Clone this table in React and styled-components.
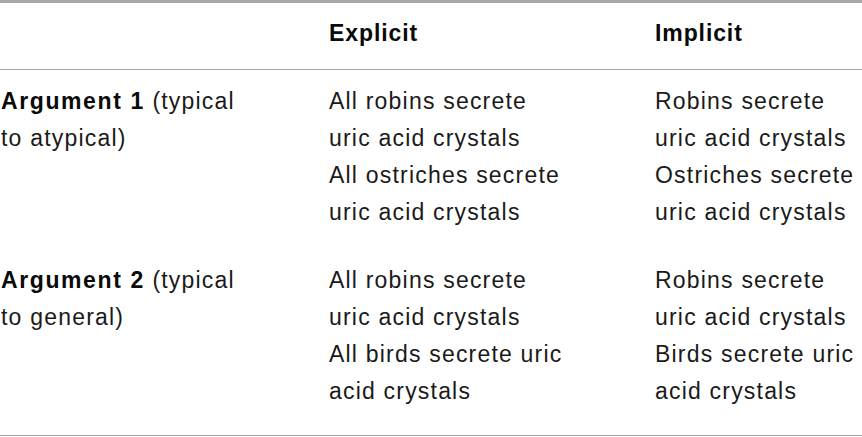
import React from "react";
import styled, { createGlobalStyle } from "styled-components";

const GlobalStyle = createGlobalStyle`
  html, body {
    margin: 0;
    padding: 0;
    background: #ffffff;
  }
  body {
    font-family: "Liberation Sans", Arial, sans-serif;
    color: #1a1a1a;
  }
`;

const Table = styled.div`
  width: 862px;
  border-top: 3px solid #a8a8a8;
  border-bottom: 1px solid #a4a4a4;
  padding-bottom: 7px;
  font-size: 23px;
  line-height: 37px;
  letter-spacing: 1.2px;
`;

const Row = styled.div`
  display: grid;
  grid-template-columns: 328px 326px 1fr;
  padding: ${(p) => (p.head ? "12px 0 17px" : "13px 0 18px")};
  border-bottom: ${(p) => (p.head ? "1px solid #a4a4a4" : "none")};
`;

const Cell = styled.div`
  padding-left: 1px;
  font-weight: ${(p) => (p.bold ? 700 : 400)};
  letter-spacing: ${(p) => (p.bold ? "0.9px" : "inherit")};
  color: ${(p) => (p.bold ? "#0a0a0a" : "inherit")};
`;

const Line = styled.div`
  white-space: nowrap;
`;

const Strong = styled.b`
  font-weight: 700;
  letter-spacing: 1.6px;
  color: #0a0a0a;
`;

const rows = [
  {
    label: "Argument 1",
    rest: ["(typical", "to atypical)"],
    explicit: [
      "All robins secrete",
      "uric acid crystals",
      "All ostriches secrete",
      "uric acid crystals",
    ],
    implicit: [
      "Robins secrete",
      "uric acid crystals",
      "Ostriches secrete",
      "uric acid crystals",
    ],
  },
  {
    label: "Argument 2",
    rest: ["(typical", "to general)"],
    explicit: [
      "All robins secrete",
      "uric acid crystals",
      "All birds secrete uric",
      "acid crystals",
    ],
    implicit: [
      "Robins secrete",
      "uric acid crystals",
      "Birds secrete uric",
      "acid crystals",
    ],
  },
];

export default function App() {
  return (
    <>
      <GlobalStyle />
      <Table>
        <Row head>
          <Cell />
          <Cell bold>Explicit</Cell>
          <Cell bold>Implicit</Cell>
        </Row>
        {rows.map((r) => (
          <Row key={r.label}>
            <Cell>
              <Line>
                <Strong>{r.label}</Strong> {r.rest[0]}
              </Line>
              <Line>{r.rest[1]}</Line>
            </Cell>
            <Cell>
              {r.explicit.map((l, i) => (
                <Line key={i}>{l}</Line>
              ))}
            </Cell>
            <Cell>
              {r.implicit.map((l, i) => (
                <Line key={i}>{l}</Line>
              ))}
            </Cell>
          </Row>
        ))}
      </Table>
    </>
  );
}
